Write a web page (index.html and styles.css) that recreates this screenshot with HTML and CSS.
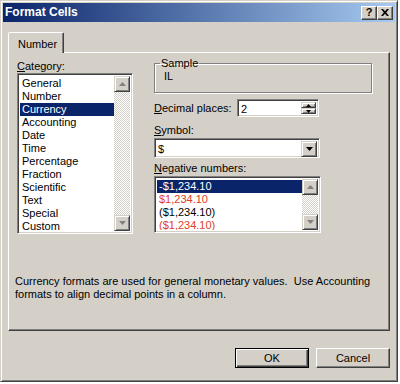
FILE: index.html
```html
<!DOCTYPE html>
<html lang="en">
<head>
  <meta charset="UTF-8">
  <title>Format Cells</title>
  <link rel="stylesheet" href="styles.css">
</head>
<body>
  <div class="dialog">
    <div class="titlebar">
      <span class="title">Format Cells</span>
      <div class="caption-buttons">
        <span class="cap-btn">?</span>
        <span class="cap-btn">
          <svg width="8" height="7" viewBox="0 0 8 7"><path d="M0 0h2l2 2.2L6 0h2L5.2 3.5 8 7H6L4 4.8 2 7H0l2.8-3.5z" fill="#000"/></svg>
        </span>
      </div>
    </div>

    <div class="tabs">
      <div class="tab">Number</div>
    </div>

    <div class="panel">
      <div class="columns">
        <div class="left">
          <div class="label category-label"><u>C</u>ategory:</div>
          <div class="listbox category">
            <ul class="items">
              <li>General</li>
              <li>Number</li>
              <li class="selected">Currency</li>
              <li>Accounting</li>
              <li>Date</li>
              <li>Time</li>
              <li>Percentage</li>
              <li>Fraction</li>
              <li>Scientific</li>
              <li>Text</li>
              <li>Special</li>
              <li>Custom</li>
            </ul>
            <div class="scrollbar">
              <span class="scroll-btn"><svg width="7" height="4" viewBox="0 0 7 4"><path d="M3.5 0L7 4H0z" fill="#808080"/></svg></span>
              <span class="track"></span>
              <span class="scroll-btn"><svg width="7" height="4" viewBox="0 0 7 4"><path d="M0 0h7L3.5 4z" fill="#808080"/></svg></span>
            </div>
          </div>
        </div>

        <div class="right">
          <fieldset class="sample">
            <legend>Sample</legend>
            <div class="sample-value">IL</div>
          </fieldset>

          <div class="decimal-row">
            <span class="label decimal-label"><u>D</u>ecimal places:</span>
            <div class="field spin">
              <span class="field-text">2</span>
              <div class="spin-buttons">
                <span class="spin-btn"><svg width="5" height="3" viewBox="0 0 5 3"><path d="M2.5 0L5 3H0z" fill="#000"/></svg></span>
                <span class="spin-btn"><svg width="5" height="3" viewBox="0 0 5 3"><path d="M0 0h5L2.5 3z" fill="#000"/></svg></span>
              </div>
            </div>
          </div>

          <div class="label symbol-label"><u>S</u>ymbol:</div>
          <div class="field dropdown">
            <span class="field-text">$</span>
            <span class="scroll-btn"><svg width="7" height="4" viewBox="0 0 7 4"><path d="M0 0h7L3.5 4z" fill="#000"/></svg></span>
          </div>

          <div class="label negative-label"><u>N</u>egative numbers:</div>
          <div class="listbox negative">
            <ul class="items">
              <li class="selected">-$1,234.10</li>
              <li class="red">$1,234.10</li>
              <li>($1,234.10)</li>
              <li class="red">($1,234.10)</li>
            </ul>
            <div class="scrollbar">
              <span class="scroll-btn"><svg width="7" height="4" viewBox="0 0 7 4"><path d="M3.5 0L7 4H0z" fill="#808080"/></svg></span>
              <span class="track"></span>
              <span class="scroll-btn"><svg width="7" height="4" viewBox="0 0 7 4"><path d="M0 0h7L3.5 4z" fill="#808080"/></svg></span>
            </div>
          </div>
        </div>
      </div>

      <p class="description">Currency formats are used for general monetary values.&nbsp; Use Accounting<br>formats to align decimal points in a column.</p>
    </div>

    <div class="buttons">
      <button class="btn default">OK</button>
      <button class="btn">Cancel</button>
    </div>
  </div>
</body>
</html>
```

FILE: styles.css
```css
* {
  box-sizing: border-box;
}

body {
  margin: 0;
  background: #fff;
  font-family: 'Liberation Sans', Arial, sans-serif;
  font-size: 11px;
  line-height: 13px;
  color: #000;
}

u {
  text-decoration: underline;
}

.dialog {
  width: 398px;
  height: 382px;
  background: #d4d0c8;
  border: 1px solid;
  border-color: #d4d0c8 #404040 #404040 #d4d0c8;
  box-shadow: inset 1px 1px #fff, inset -1px -1px #808080;
  padding: 2px;
  display: flex;
  flex-direction: column;
}

/* title bar */
.titlebar {
  height: 19px;
  flex-shrink: 0;
  background: linear-gradient(to right, #0a246a, #a6caf0);
  display: flex;
  align-items: center;
  justify-content: space-between;
  padding: 0 2px 0 2px;
}

.title {
  color: #fff;
  font-weight: bold;
  font-size: 12px;
}

.caption-buttons {
  display: flex;
}

.cap-btn {
  width: 16px;
  height: 14px;
  display: flex;
  align-items: center;
  justify-content: center;
  background: #d4d0c8;
  border: 1px solid;
  border-color: #fff #404040 #404040 #fff;
  box-shadow: inset -1px -1px #808080;
  font-weight: bold;
  font-size: 11px;
  line-height: 1;
}

/* tab */
.tabs {
  display: flex;
  margin: 10px 0 -1px 5px;
  position: relative;
  z-index: 1;
}

.tab {
  width: 56px;
  height: 21px;
  background: #d4d0c8;
  border: 1px solid;
  border-bottom: none;
  border-color: #fff #404040 transparent #fff;
  box-shadow: inset -1px 0 #808080;
  border-radius: 2px 2px 0 0;
  padding: 5px 0 0 9px;
}

.panel {
  margin: 0 5px;
  height: 279px;
  flex-shrink: 0;
  border: 1px solid;
  border-color: #fff #404040 #404040 #fff;
  box-shadow: inset -1px -1px #808080;
  padding: 4px 8px 0 8px;
}

.columns {
  display: grid;
  grid-template-columns: 116px 218px;
  column-gap: 21px;
}

.category-label {
  margin-top: 3px;
}

/* list boxes */
.listbox {
  display: flex;
  background: #fff;
  border: 1px solid;
  border-color: #808080 #fff #fff #808080;
  box-shadow: inset 1px 1px #404040, inset -1px -1px #d4d0c8;
  padding: 2px;
  overflow: hidden;
}

.listbox.category {
  height: 161px;
}

.listbox.negative {
  height: 57px;
  width: 167px;
  margin-top: 1px;
}

.items {
  list-style: none;
  margin: 0;
  padding: 1px 0 0 0;
  flex: 1;
  overflow: hidden;
}

.items li {
  padding-left: 2px;
  height: 13px;
  white-space: nowrap;
}

.items li.selected {
  background: #0a246a;
  color: #fff;
}

.items li.red {
  color: #e03c28;
}

.scrollbar {
  width: 16px;
  display: flex;
  flex-direction: column;
}

.scroll-btn {
  width: 16px;
  height: 16px;
  flex-shrink: 0;
  display: flex;
  align-items: center;
  justify-content: center;
  background: #d4d0c8;
  border: 1px solid;
  border-color: #d4d0c8 #404040 #404040 #d4d0c8;
  box-shadow: inset 1px 1px #fff, inset -1px -1px #808080;
}

.track {
  flex: 1;
  background: repeating-conic-gradient(#fff 0 25%, #d4d0c8 0 50%) 0 0 / 2px 2px;
}

/* sample group */
.sample {
  margin: 0;
  padding: 0 8px 9px 9px;
  border: 1px solid #808080;
  box-shadow: inset 1px 1px #fff, 1px 1px #fff;
  min-width: 0;
}

.sample legend {
  padding: 0 1px;
  margin-left: -4px;
}

.decimal-row {
  display: flex;
  align-items: center;
  margin-top: 6px;
}

.decimal-label {
  width: 83px;
}

/* edit fields */
.field {
  display: flex;
  align-items: stretch;
  background: #fff;
  border: 1px solid;
  border-color: #808080 #fff #fff #808080;
  box-shadow: inset 1px 1px #404040, inset -1px -1px #d4d0c8;
  padding: 2px;
}

.field-text {
  flex: 1;
  padding-left: 1px;
  line-height: 14px;
}

.spin {
  width: 82px;
  height: 18px;
}

.spin-buttons {
  display: flex;
  flex-direction: column;
}

.spin-btn {
  width: 15px;
  height: 7px;
  display: flex;
  align-items: center;
  justify-content: center;
  background: #d4d0c8;
  border: 1px solid;
  border-color: #d4d0c8 #404040 #404040 #d4d0c8;
  box-shadow: inset 1px 1px #fff, inset -1px -1px #808080;
}

.symbol-label {
  margin-top: 7px;
}

.dropdown {
  width: 166px;
  height: 20px;
  margin-top: 1px;
}

.dropdown .field-text {
  line-height: 16px;
}

.negative-label {
  margin-top: 4px;
}

.description {
  margin: 41px 0 0 -2px;
}

/* buttons */
.buttons {
  display: flex;
  justify-content: flex-end;
  gap: 7px;
  margin: 17px 5px 0 0;
}

.btn {
  width: 74px;
  height: 20px;
  padding: 0;
  font: inherit;
  color: #000;
  background: #d4d0c8;
  border: 1px solid;
  border-color: #fff #404040 #404040 #fff;
  box-shadow: inset -1px -1px #808080;
}

.btn.default {
  border-color: #000;
  box-shadow: inset 1px 1px #fff, inset -1px -1px #404040, inset -2px -2px #808080;
}
```
